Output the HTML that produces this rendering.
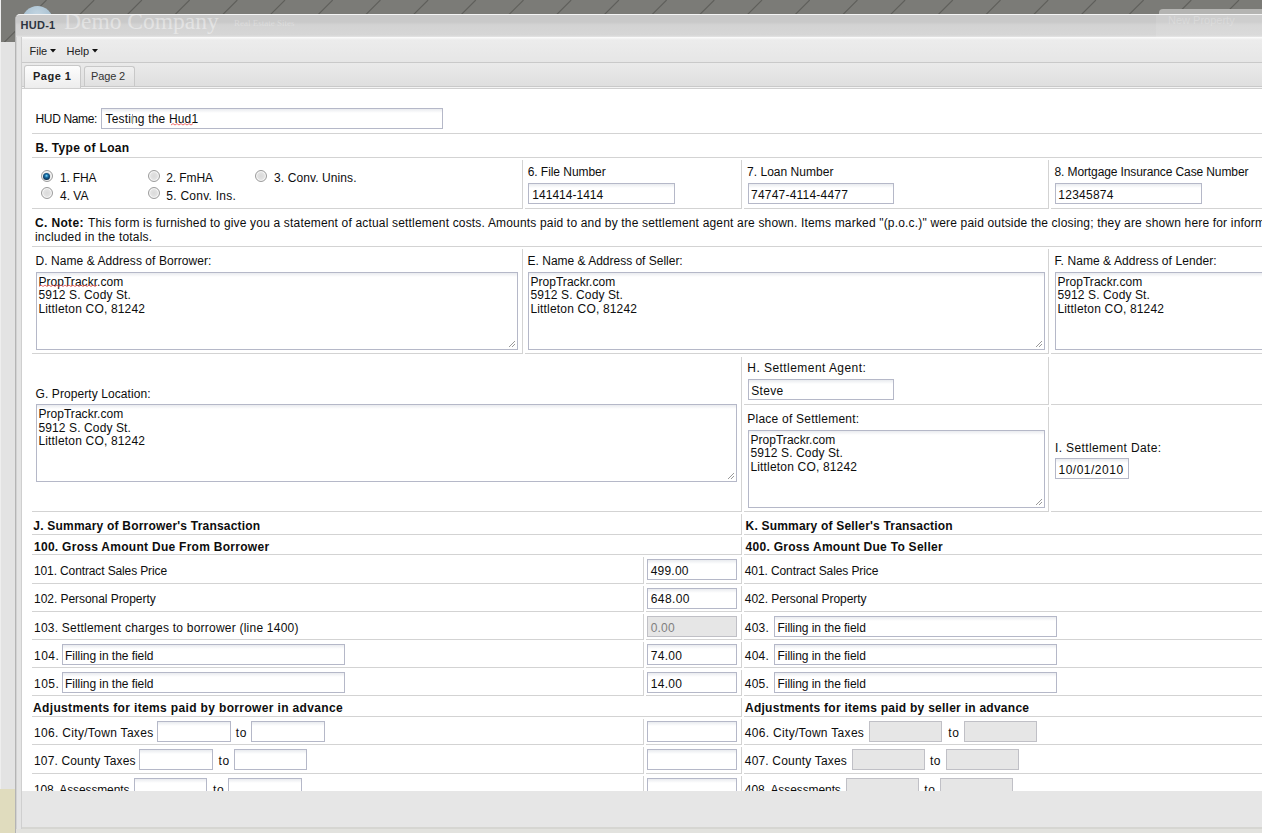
<!DOCTYPE html><html><head><meta charset="utf-8"><style>
html,body{margin:0;padding:0;width:1262px;height:833px;overflow:hidden;background:#e3e3e3}
.t{position:absolute;white-space:nowrap;font-family:"Liberation Sans",sans-serif;font-size:12px;line-height:14px;color:#0d0d0d}
.b{position:absolute}
</style></head><body>
<div class="b" style="left:0px;top:0px;width:1262px;height:42px;background:#7b7b77"></div>
<svg class="b" style="left:0;top:0" width="1262" height="42"><g stroke="#5f5f5b" stroke-width="1.1"><line x1="-1.2" y1="0" x2="-46.2" y2="45" /><line x1="46.5" y1="0" x2="1.5" y2="45" /><line x1="94.2" y1="0" x2="49.2" y2="45" /><line x1="141.9" y1="0" x2="96.9" y2="45" /><line x1="189.6" y1="0" x2="144.6" y2="45" /><line x1="237.3" y1="0" x2="192.3" y2="45" /><line x1="285.0" y1="0" x2="240.0" y2="45" /><line x1="332.7" y1="0" x2="287.7" y2="45" /><line x1="380.4" y1="0" x2="335.4" y2="45" /><line x1="428.1" y1="0" x2="383.1" y2="45" /><line x1="475.8" y1="0" x2="430.8" y2="45" /><line x1="523.5" y1="0" x2="478.5" y2="45" /><line x1="571.2" y1="0" x2="526.2" y2="45" /><line x1="618.9" y1="0" x2="573.9" y2="45" /><line x1="666.6" y1="0" x2="621.6" y2="45" /><line x1="714.3" y1="0" x2="669.3" y2="45" /><line x1="762.0" y1="0" x2="717.0" y2="45" /><line x1="809.7" y1="0" x2="764.7" y2="45" /><line x1="857.4" y1="0" x2="812.4" y2="45" /><line x1="905.1" y1="0" x2="860.1" y2="45" /><line x1="952.8" y1="0" x2="907.8" y2="45" /><line x1="1000.5" y1="0" x2="955.5" y2="45" /><line x1="1048.2" y1="0" x2="1003.2" y2="45" /><line x1="1095.9" y1="0" x2="1050.9" y2="45" /><line x1="1143.6" y1="0" x2="1098.6" y2="45" /><line x1="1191.3" y1="0" x2="1146.3" y2="45" /><line x1="1239.0" y1="0" x2="1194.0" y2="45" /><line x1="1286.7" y1="0" x2="1241.7" y2="45" /><line x1="1334.4" y1="0" x2="1289.4" y2="45" /></g></svg>
<div class="b" style="left:0px;top:0px;width:1px;height:834px;background:#eeeeee"></div>
<div class="b" style="left:22px;top:6px;width:31px;height:31px;border-radius:50%;background:radial-gradient(circle at 50% 30%,#c4d6e2,#93b0c4)"></div>
<div class="b" style="left:1159px;top:9px;width:120px;height:30px;border-radius:4px;background:#b4b4b2"></div>
<div class="b" style="left:0px;top:789px;width:15px;height:44px;background:#e0dcbe"></div>
<div class="b" style="left:15px;top:14px;width:1300px;height:830px;border-radius:5px 0 0 0;background:#e4e4e4;border-left:1px solid #b4b4b4;border-top:1px solid #f4f4f4;box-sizing:border-box"></div>
<div class="b" style="left:16px;top:37px;width:1px;height:796px;background:#d2d2d2"></div>
<div class="b" style="left:16px;top:15px;width:1246px;height:22px;background:linear-gradient(#c9c9c9 0,#c9c9c9 7px,#d3d3d3 10px,#d6d6d6 20px,#e4e4e4 22px);border-radius:4px 0 0 0"></div>
<div class="t" style="left:20.5px;top:19.0px;font-weight:bold;font-size:11px;line-height:13px;color:#2d3440;letter-spacing:0.275px;">HUD-1</div>
<div class="t" style="left:64px;top:8px;font-family:'Liberation Serif',serif;font-size:23.5px;line-height:26px;color:rgba(255,255,255,0.42)">Demo Company</div>
<div class="t" style="left:234px;top:17px;font-family:'Liberation Serif',serif;font-size:9px;line-height:12px;color:rgba(255,255,255,0.28)">Real Estate Sites</div>
<div class="b" style="left:1156px;top:15px;width:110px;height:22px;background:rgba(255,255,255,0.10)"></div>
<div class="t" style="left:1168px;top:14px;font-size:11px;line-height:12px;color:rgba(255,255,255,0.22)">New Property</div>
<div class="b" style="left:21px;top:37px;width:1241px;height:796px;background:#fff;border-left:1px solid #cfcfcf;box-sizing:border-box"></div>
<div class="b" style="left:22px;top:37px;width:1240px;height:26px;background:linear-gradient(#f6f6f6 0,#ececec 2px,#e6e6e6 100%);border-top:1px solid #fafafa;border-bottom:1px solid #c9c9c9;box-sizing:border-box"></div>
<div class="t" style="left:29.5px;top:44.5px;font-size:11px;line-height:13px;color:#222;">File</div>
<svg class="b" style="left:50px;top:49px" width="6" height="4"><path d="M0 0H6L3 3.5Z" fill="#111"/></svg>
<div class="t" style="left:66.5px;top:44.5px;font-size:11px;line-height:13px;color:#222;">Help</div>
<svg class="b" style="left:92px;top:49px" width="6" height="4"><path d="M0 0H6L3 3.5Z" fill="#111"/></svg>
<div class="b" style="left:22px;top:63px;width:1240px;height:26px;background:linear-gradient(#eaeaea,#dedede);border-bottom:1px solid #cacaca;box-sizing:border-box"></div>
<div class="b" style="left:22px;top:86px;width:1240px;height:1px;background:#c9c9c9"></div>
<div class="b" style="left:22px;top:87px;width:1240px;height:1px;background:#f4f4f4"></div>
<div class="b" style="left:22px;top:88px;width:1240px;height:1px;background:#cfcfcf"></div>
<div class="b" style="left:24px;top:65px;width:57px;height:23px;box-sizing:border-box;border:1px solid #c8c8c8;border-bottom:none;border-radius:3px 3px 0 0;background:linear-gradient(#fdfdfd,#ededed)"></div>
<div class="t" style="left:33.0px;top:70.0px;font-weight:bold;font-size:11px;line-height:13px;color:#222;letter-spacing:0.5px;">Page 1</div>
<div class="b" style="left:84px;top:66px;width:51px;height:20px;box-sizing:border-box;border:1px solid #c8c8c8;border-bottom:none;border-radius:3px 3px 0 0;background:linear-gradient(#f0f0f0,#e0e0e0)"></div>
<div class="t" style="left:91.0px;top:70.0px;font-size:11px;line-height:13px;color:#333;letter-spacing:-0.14px;">Page 2</div>
<div class="t" style="left:35.5px;top:112.0px;letter-spacing:-0.35px;">HUD Name:</div>
<div class="b" style="left:101px;top:108px;width:342px;height:21px;border:1px solid #b5b8c8;box-sizing:border-box;background:linear-gradient(#e9ebef,#fff 4px)"></div>
<div class="t" style="left:105.5px;top:112.0px;color:#0d0d0d;letter-spacing:0.167px;">Testing the Hud1</div>
<div class="b" style="left:32px;top:133px;width:1230px;height:1px;background:#d3d3d3"></div>
<div class="t" style="left:35.5px;top:140.5px;font-weight:bold;letter-spacing:0.321px;">B. Type of Loan</div>
<div class="b" style="left:32px;top:157px;width:1230px;height:1px;background:#d3d3d3"></div>
<div class="b" style="left:40.8px;top:170px;width:12px;height:12px;border-radius:50%;box-sizing:border-box;border:1px solid #9c9c9c;background:radial-gradient(circle at 50% 50%,#dadada 0,#e2e2e2 48%,#f6f6f6 62%,#cfcfcf 100%)"></div>
<div class="b" style="left:43.3px;top:172.5px;width:7px;height:7px;border-radius:50%;background:radial-gradient(circle at 50% 40%,#7fe0ff 0,#1a6ea6 30%,#0a2a48 75%)"></div>
<div class="t" style="left:60.0px;top:171.2px;letter-spacing:-0.16px;">1. FHA</div>
<div class="b" style="left:148px;top:170px;width:12px;height:12px;border-radius:50%;box-sizing:border-box;border:1px solid #9c9c9c;background:radial-gradient(circle at 50% 50%,#dadada 0,#e2e2e2 48%,#f6f6f6 62%,#cfcfcf 100%)"></div>
<div class="t" style="left:166.3px;top:171.2px;letter-spacing:-0.117px;">2. FmHA</div>
<div class="b" style="left:255px;top:170px;width:12px;height:12px;border-radius:50%;box-sizing:border-box;border:1px solid #9c9c9c;background:radial-gradient(circle at 50% 50%,#dadada 0,#e2e2e2 48%,#f6f6f6 62%,#cfcfcf 100%)"></div>
<div class="t" style="left:274.0px;top:171.2px;letter-spacing:0.1px;">3. Conv. Unins.</div>
<div class="b" style="left:40.8px;top:187.4px;width:12px;height:12px;border-radius:50%;box-sizing:border-box;border:1px solid #9c9c9c;background:radial-gradient(circle at 50% 50%,#dadada 0,#e2e2e2 48%,#f6f6f6 62%,#cfcfcf 100%)"></div>
<div class="t" style="left:60.0px;top:188.8px;letter-spacing:0.0px;">4. VA</div>
<div class="b" style="left:148px;top:187.4px;width:12px;height:12px;border-radius:50%;box-sizing:border-box;border:1px solid #9c9c9c;background:radial-gradient(circle at 50% 50%,#dadada 0,#e2e2e2 48%,#f6f6f6 62%,#cfcfcf 100%)"></div>
<div class="t" style="left:166.3px;top:188.8px;letter-spacing:0.25px;">5. Conv. Ins.</div>
<div class="b" style="left:32px;top:208px;width:491px;height:1px;background:#d3d3d3"></div>
<div class="b" style="left:522px;top:160px;width:1px;height:49px;background:#d3d3d3"></div>
<div class="t" style="left:527.7px;top:165.2px;letter-spacing:-0.054px;">6. File Number</div>
<div class="b" style="left:528px;top:183px;width:147px;height:21px;border:1px solid #b5b8c8;box-sizing:border-box;background:linear-gradient(#e9ebef,#fff 4px)"></div>
<div class="t" style="left:532.3px;top:187.5px;color:#0d0d0d;letter-spacing:0.02px;">141414-1414</div>
<div class="b" style="left:525px;top:208px;width:217px;height:1px;background:#d3d3d3"></div>
<div class="b" style="left:741px;top:160px;width:1px;height:49px;background:#d3d3d3"></div>
<div class="t" style="left:747.0px;top:165.2px;letter-spacing:0.031px;">7. Loan Number</div>
<div class="b" style="left:748px;top:183px;width:146px;height:21px;border:1px solid #b5b8c8;box-sizing:border-box;background:linear-gradient(#e9ebef,#fff 4px)"></div>
<div class="t" style="left:751.0px;top:187.5px;color:#0d0d0d;letter-spacing:0.214px;">74747-4114-4477</div>
<div class="b" style="left:744px;top:208px;width:305px;height:1px;background:#d3d3d3"></div>
<div class="b" style="left:1048px;top:160px;width:1px;height:49px;background:#d3d3d3"></div>
<div class="t" style="left:1054.5px;top:165.2px;letter-spacing:-0.109px;">8. Mortgage Insurance Case Number</div>
<div class="b" style="left:1055px;top:183px;width:147px;height:21px;border:1px solid #b5b8c8;box-sizing:border-box;background:linear-gradient(#e9ebef,#fff 4px)"></div>
<div class="t" style="left:1058.3px;top:187.5px;color:#0d0d0d;letter-spacing:0.243px;">12345874</div>
<div class="b" style="left:1051px;top:208px;width:212px;height:1px;background:#d3d3d3"></div>
<div class="t" style="left:35.0px;top:215.8px;font-weight:bold;letter-spacing:0.357px;">C. Note:</div>
<div class="t" style="left:88.0px;top:215.8px;letter-spacing:0.174px;">This form is furnished to give you a statement of actual settlement costs. Amounts paid to and by the settlement agent are shown. Items marked "(p.o.c.)" were paid outside the closing; they are shown here for informational purposes and are not</div>
<div class="t" style="left:35.0px;top:230.0px;letter-spacing:0.2px;">included in the totals.</div>
<div class="b" style="left:32px;top:246px;width:1230px;height:1px;background:#d3d3d3"></div>
<div class="t" style="left:35.6px;top:253.8px;letter-spacing:0.059px;">D. Name &amp; Address of Borrower:</div>
<div class="b" style="left:36px;top:272px;width:482px;height:78px;border:1px solid #b5b8c8;box-sizing:border-box;background:linear-gradient(#e9ebef,#fff 4px)"></div>
<div class="t" style="left:38.4px;top:274.7px;letter-spacing:0.046px;">PropTrackr.com</div>
<div class="t" style="left:38.4px;top:288.3px;letter-spacing:0.12px;">5912 S. Cody St.</div>
<div class="t" style="left:38.4px;top:301.9px;letter-spacing:0.178px;">Littleton CO, 81242</div>
<svg class="b" style="left:508px;top:340px" width="8" height="8"><path d="M1 7 L7 1 M4 7 L7 4" stroke="#9a9a9a" stroke-width="1"/></svg>
<div class="b" style="left:32px;top:353px;width:491px;height:1px;background:#d3d3d3"></div>
<div class="b" style="left:522px;top:249px;width:1px;height:105px;background:#d3d3d3"></div>
<div class="t" style="left:527.6px;top:253.8px;letter-spacing:-0.011px;">E. Name &amp; Address of Seller:</div>
<div class="b" style="left:528px;top:272px;width:517px;height:78px;border:1px solid #b5b8c8;box-sizing:border-box;background:linear-gradient(#e9ebef,#fff 4px)"></div>
<div class="t" style="left:530.4px;top:274.7px;letter-spacing:0.046px;">PropTrackr.com</div>
<div class="t" style="left:530.4px;top:288.3px;letter-spacing:0.12px;">5912 S. Cody St.</div>
<div class="t" style="left:530.4px;top:301.9px;letter-spacing:0.178px;">Littleton CO, 81242</div>
<svg class="b" style="left:1035px;top:340px" width="8" height="8"><path d="M1 7 L7 1 M4 7 L7 4" stroke="#9a9a9a" stroke-width="1"/></svg>
<div class="b" style="left:525px;top:353px;width:524px;height:1px;background:#d3d3d3"></div>
<div class="b" style="left:1048px;top:249px;width:1px;height:105px;background:#d3d3d3"></div>
<div class="t" style="left:1054.5px;top:253.8px;letter-spacing:0.074px;">F. Name &amp; Address of Lender:</div>
<div class="b" style="left:1055px;top:272px;width:246px;height:78px;border:1px solid #b5b8c8;box-sizing:border-box;background:linear-gradient(#e9ebef,#fff 4px)"></div>
<div class="t" style="left:1057.4px;top:274.7px;letter-spacing:0.046px;">PropTrackr.com</div>
<div class="t" style="left:1057.4px;top:288.3px;letter-spacing:0.12px;">5912 S. Cody St.</div>
<div class="t" style="left:1057.4px;top:301.9px;letter-spacing:0.178px;">Littleton CO, 81242</div>
<div class="b" style="left:1051px;top:353px;width:212px;height:1px;background:#d3d3d3"></div>
<div class="t" style="left:35.6px;top:386.8px;letter-spacing:0.08px;">G. Property Location:</div>
<div class="b" style="left:36px;top:404px;width:701px;height:78px;border:1px solid #b5b8c8;box-sizing:border-box;background:linear-gradient(#e9ebef,#fff 4px)"></div>
<div class="t" style="left:38.4px;top:407.0px;letter-spacing:0.046px;">PropTrackr.com</div>
<div class="t" style="left:38.4px;top:420.6px;letter-spacing:0.12px;">5912 S. Cody St.</div>
<div class="t" style="left:38.4px;top:434.2px;letter-spacing:0.178px;">Littleton CO, 81242</div>
<svg class="b" style="left:727px;top:472px" width="8" height="8"><path d="M1 7 L7 1 M4 7 L7 4" stroke="#9a9a9a" stroke-width="1"/></svg>
<div class="b" style="left:32px;top:511px;width:710px;height:1px;background:#d3d3d3"></div>
<div class="b" style="left:741px;top:357px;width:1px;height:155px;background:#d3d3d3"></div>
<div class="t" style="left:747.3px;top:361.2px;letter-spacing:0.447px;">H. Settlement Agent:</div>
<div class="b" style="left:748px;top:379px;width:146px;height:21px;border:1px solid #b5b8c8;box-sizing:border-box;background:linear-gradient(#e9ebef,#fff 4px)"></div>
<div class="t" style="left:751.3px;top:383.5px;color:#0d0d0d;letter-spacing:0.275px;">Steve</div>
<div class="b" style="left:744px;top:404px;width:305px;height:1px;background:#d3d3d3"></div>
<div class="b" style="left:1048px;top:357px;width:1px;height:48px;background:#d3d3d3"></div>
<div class="b" style="left:1051px;top:404px;width:212px;height:1px;background:#d3d3d3"></div>
<div class="t" style="left:747.3px;top:412.0px;letter-spacing:0.232px;">Place of Settlement:</div>
<div class="b" style="left:748px;top:430px;width:297px;height:78px;border:1px solid #b5b8c8;box-sizing:border-box;background:linear-gradient(#e9ebef,#fff 4px)"></div>
<div class="t" style="left:750.4px;top:432.7px;letter-spacing:0.046px;">PropTrackr.com</div>
<div class="t" style="left:750.4px;top:446.3px;letter-spacing:0.12px;">5912 S. Cody St.</div>
<div class="t" style="left:750.4px;top:459.9px;letter-spacing:0.178px;">Littleton CO, 81242</div>
<svg class="b" style="left:1035px;top:498px" width="8" height="8"><path d="M1 7 L7 1 M4 7 L7 4" stroke="#9a9a9a" stroke-width="1"/></svg>
<div class="b" style="left:744px;top:511px;width:305px;height:1px;background:#d3d3d3"></div>
<div class="b" style="left:1048px;top:407px;width:1px;height:105px;background:#d3d3d3"></div>
<div class="t" style="left:1055.0px;top:440.5px;letter-spacing:0.372px;">I. Settlement Date:</div>
<div class="b" style="left:1055px;top:458px;width:74px;height:21px;border:1px solid #b5b8c8;box-sizing:border-box;background:linear-gradient(#e9ebef,#fff 4px)"></div>
<div class="t" style="left:1058.5px;top:462.5px;color:#0d0d0d;letter-spacing:0.5px;">10/01/2010</div>
<div class="b" style="left:1051px;top:511px;width:212px;height:1px;background:#d3d3d3"></div>
<div class="t" style="left:33.3px;top:519.0px;font-weight:bold;letter-spacing:0.209px;">J. Summary of Borrower's Transaction</div>
<div class="b" style="left:32px;top:534px;width:710px;height:1px;background:#d3d3d3"></div>
<div class="b" style="left:741px;top:514px;width:1px;height:21px;background:#d3d3d3"></div>
<div class="t" style="left:745.6px;top:519.0px;font-weight:bold;letter-spacing:0.185px;">K. Summary of Seller's Transaction</div>
<div class="b" style="left:744px;top:534px;width:519px;height:1px;background:#d3d3d3"></div>
<div class="t" style="left:34.0px;top:540.0px;font-weight:bold;letter-spacing:0.279px;">100. Gross Amount Due From Borrower</div>
<div class="b" style="left:32px;top:554px;width:710px;height:1px;background:#d3d3d3"></div>
<div class="b" style="left:741px;top:537px;width:1px;height:18px;background:#d3d3d3"></div>
<div class="t" style="left:745.6px;top:540.0px;font-weight:bold;letter-spacing:0.28px;">400. Gross Amount Due To Seller</div>
<div class="b" style="left:744px;top:554px;width:519px;height:1px;background:#d3d3d3"></div>
<div class="t" style="left:34.0px;top:564.3px;letter-spacing:-0.125px;">101. Contract Sales Price</div>
<div class="b" style="left:32px;top:583px;width:612px;height:1px;background:#d3d3d3"></div>
<div class="b" style="left:643px;top:557px;width:1px;height:27px;background:#d3d3d3"></div>
<div class="b" style="left:647px;top:559px;width:90px;height:21px;border:1px solid #b5b8c8;box-sizing:border-box;background:linear-gradient(#e9ebef,#fff 4px)"></div>
<div class="t" style="left:650.7px;top:564.3px;color:#0d0d0d;letter-spacing:0.22px;">499.00</div>
<div class="b" style="left:646px;top:583px;width:96px;height:1px;background:#d3d3d3"></div>
<div class="b" style="left:741px;top:557px;width:1px;height:27px;background:#d3d3d3"></div>
<div class="t" style="left:744.8px;top:564.3px;letter-spacing:-0.104px;">401. Contract Sales Price</div>
<div class="b" style="left:744px;top:583px;width:519px;height:1px;background:#d3d3d3"></div>
<div class="t" style="left:34.0px;top:592.2px;letter-spacing:-0.048px;">102. Personal Property</div>
<div class="b" style="left:32px;top:611px;width:612px;height:1px;background:#d3d3d3"></div>
<div class="b" style="left:643px;top:586px;width:1px;height:26px;background:#d3d3d3"></div>
<div class="b" style="left:647px;top:588px;width:90px;height:21px;border:1px solid #b5b8c8;box-sizing:border-box;background:linear-gradient(#e9ebef,#fff 4px)"></div>
<div class="t" style="left:650.7px;top:592.2px;color:#0d0d0d;letter-spacing:0.42px;">648.00</div>
<div class="b" style="left:646px;top:611px;width:96px;height:1px;background:#d3d3d3"></div>
<div class="b" style="left:741px;top:586px;width:1px;height:26px;background:#d3d3d3"></div>
<div class="t" style="left:744.8px;top:592.2px;letter-spacing:-0.048px;">402. Personal Property</div>
<div class="b" style="left:744px;top:611px;width:519px;height:1px;background:#d3d3d3"></div>
<div class="t" style="left:34.0px;top:620.5px;letter-spacing:0.224px;">103. Settlement charges to borrower (line 1400)</div>
<div class="b" style="left:32px;top:639px;width:612px;height:1px;background:#d3d3d3"></div>
<div class="b" style="left:643px;top:614px;width:1px;height:26px;background:#d3d3d3"></div>
<div class="b" style="left:647px;top:616px;width:90px;height:21px;border:1px solid #c0c0c6;box-sizing:border-box;background:#e6e6e6"></div>
<div class="t" style="left:650.7px;top:620.5px;color:#808080;letter-spacing:0.2px;">0.00</div>
<div class="b" style="left:646px;top:639px;width:96px;height:1px;background:#d3d3d3"></div>
<div class="b" style="left:741px;top:614px;width:1px;height:26px;background:#d3d3d3"></div>
<div class="t" style="left:744.8px;top:620.5px;letter-spacing:0.2px;">403.</div>
<div class="b" style="left:774px;top:616px;width:283px;height:21px;border:1px solid #b5b8c8;box-sizing:border-box;background:linear-gradient(#e9ebef,#fff 4px)"></div>
<div class="t" style="left:777.5px;top:620.5px;color:#0d0d0d;letter-spacing:-0.053px;">Filling in the field</div>
<div class="b" style="left:744px;top:639px;width:519px;height:1px;background:#d3d3d3"></div>
<div class="t" style="left:34.0px;top:648.8px;letter-spacing:0.5px;">104.</div>
<div class="b" style="left:62px;top:644px;width:283px;height:21px;border:1px solid #b5b8c8;box-sizing:border-box;background:linear-gradient(#e9ebef,#fff 4px)"></div>
<div class="t" style="left:65.1px;top:648.8px;color:#0d0d0d;letter-spacing:-0.053px;">Filling in the field</div>
<div class="b" style="left:32px;top:667px;width:612px;height:1px;background:#d3d3d3"></div>
<div class="b" style="left:643px;top:642px;width:1px;height:26px;background:#d3d3d3"></div>
<div class="b" style="left:647px;top:644px;width:90px;height:21px;border:1px solid #b5b8c8;box-sizing:border-box;background:linear-gradient(#e9ebef,#fff 4px)"></div>
<div class="t" style="left:650.7px;top:648.8px;color:#0d0d0d;letter-spacing:0.3px;">74.00</div>
<div class="b" style="left:646px;top:667px;width:96px;height:1px;background:#d3d3d3"></div>
<div class="b" style="left:741px;top:642px;width:1px;height:26px;background:#d3d3d3"></div>
<div class="t" style="left:744.8px;top:648.8px;letter-spacing:0.2px;">404.</div>
<div class="b" style="left:774px;top:644px;width:283px;height:21px;border:1px solid #b5b8c8;box-sizing:border-box;background:linear-gradient(#e9ebef,#fff 4px)"></div>
<div class="t" style="left:777.5px;top:648.8px;color:#0d0d0d;letter-spacing:-0.053px;">Filling in the field</div>
<div class="b" style="left:744px;top:667px;width:519px;height:1px;background:#d3d3d3"></div>
<div class="t" style="left:34.0px;top:677.0px;letter-spacing:0.5px;">105.</div>
<div class="b" style="left:62px;top:672px;width:283px;height:21px;border:1px solid #b5b8c8;box-sizing:border-box;background:linear-gradient(#e9ebef,#fff 4px)"></div>
<div class="t" style="left:65.1px;top:677.0px;color:#0d0d0d;letter-spacing:-0.053px;">Filling in the field</div>
<div class="b" style="left:32px;top:695px;width:612px;height:1px;background:#d3d3d3"></div>
<div class="b" style="left:643px;top:670px;width:1px;height:26px;background:#d3d3d3"></div>
<div class="b" style="left:647px;top:672px;width:90px;height:21px;border:1px solid #b5b8c8;box-sizing:border-box;background:linear-gradient(#e9ebef,#fff 4px)"></div>
<div class="t" style="left:650.7px;top:677.0px;color:#0d0d0d;letter-spacing:0.3px;">14.00</div>
<div class="b" style="left:646px;top:695px;width:96px;height:1px;background:#d3d3d3"></div>
<div class="b" style="left:741px;top:670px;width:1px;height:26px;background:#d3d3d3"></div>
<div class="t" style="left:744.8px;top:677.0px;letter-spacing:0.2px;">405.</div>
<div class="b" style="left:774px;top:672px;width:283px;height:21px;border:1px solid #b5b8c8;box-sizing:border-box;background:linear-gradient(#e9ebef,#fff 4px)"></div>
<div class="t" style="left:777.5px;top:677.0px;color:#0d0d0d;letter-spacing:-0.053px;">Filling in the field</div>
<div class="b" style="left:744px;top:695px;width:519px;height:1px;background:#d3d3d3"></div>
<div class="t" style="left:33.0px;top:701.2px;font-weight:bold;letter-spacing:0.354px;">Adjustments for items paid by borrower in advance</div>
<div class="b" style="left:32px;top:716px;width:710px;height:1px;background:#d3d3d3"></div>
<div class="b" style="left:741px;top:698px;width:1px;height:19px;background:#d3d3d3"></div>
<div class="t" style="left:745.0px;top:701.2px;font-weight:bold;letter-spacing:0.259px;">Adjustments for items paid by seller in advance</div>
<div class="b" style="left:744px;top:716px;width:519px;height:1px;background:#d3d3d3"></div>
<div class="t" style="left:34.0px;top:725.7px;letter-spacing:0.316px;">106. City/Town Taxes</div>
<div class="b" style="left:157px;top:721px;width:74px;height:21px;border:1px solid #b5b8c8;box-sizing:border-box;background:linear-gradient(#e9ebef,#fff 4px)"></div>
<div class="t" style="left:235.8px;top:725.7px;letter-spacing:0.6px;">to</div>
<div class="b" style="left:251px;top:721px;width:74px;height:21px;border:1px solid #b5b8c8;box-sizing:border-box;background:linear-gradient(#e9ebef,#fff 4px)"></div>
<div class="b" style="left:32px;top:744px;width:612px;height:1px;background:#d3d3d3"></div>
<div class="b" style="left:643px;top:719px;width:1px;height:26px;background:#d3d3d3"></div>
<div class="b" style="left:647px;top:721px;width:90px;height:21px;border:1px solid #b5b8c8;box-sizing:border-box;background:linear-gradient(#e9ebef,#fff 4px)"></div>
<div class="b" style="left:646px;top:744px;width:96px;height:1px;background:#d3d3d3"></div>
<div class="b" style="left:741px;top:719px;width:1px;height:26px;background:#d3d3d3"></div>
<div class="t" style="left:744.8px;top:725.7px;letter-spacing:0.311px;">406. City/Town Taxes</div>
<div class="b" style="left:869px;top:721px;width:73px;height:21px;border:1px solid #c0c0c6;box-sizing:border-box;background:#e6e6e6"></div>
<div class="t" style="left:948.3px;top:725.7px;letter-spacing:0.6px;">to</div>
<div class="b" style="left:964px;top:721px;width:73px;height:21px;border:1px solid #c0c0c6;box-sizing:border-box;background:#e6e6e6"></div>
<div class="b" style="left:744px;top:744px;width:519px;height:1px;background:#d3d3d3"></div>
<div class="t" style="left:34.0px;top:753.7px;letter-spacing:0.15px;">107. County Taxes</div>
<div class="b" style="left:139px;top:749px;width:74px;height:21px;border:1px solid #b5b8c8;box-sizing:border-box;background:linear-gradient(#e9ebef,#fff 4px)"></div>
<div class="t" style="left:218.6px;top:753.7px;letter-spacing:0.6px;">to</div>
<div class="b" style="left:234px;top:749px;width:73px;height:21px;border:1px solid #b5b8c8;box-sizing:border-box;background:linear-gradient(#e9ebef,#fff 4px)"></div>
<div class="b" style="left:32px;top:773px;width:612px;height:1px;background:#d3d3d3"></div>
<div class="b" style="left:643px;top:747px;width:1px;height:27px;background:#d3d3d3"></div>
<div class="b" style="left:647px;top:749px;width:90px;height:21px;border:1px solid #b5b8c8;box-sizing:border-box;background:linear-gradient(#e9ebef,#fff 4px)"></div>
<div class="b" style="left:646px;top:773px;width:96px;height:1px;background:#d3d3d3"></div>
<div class="b" style="left:741px;top:747px;width:1px;height:27px;background:#d3d3d3"></div>
<div class="t" style="left:744.8px;top:753.7px;letter-spacing:0.175px;">407. County Taxes</div>
<div class="b" style="left:852px;top:749px;width:73px;height:21px;border:1px solid #c0c0c6;box-sizing:border-box;background:#e6e6e6"></div>
<div class="t" style="left:929.9px;top:753.7px;letter-spacing:0.6px;">to</div>
<div class="b" style="left:946px;top:749px;width:73px;height:21px;border:1px solid #c0c0c6;box-sizing:border-box;background:#e6e6e6"></div>
<div class="b" style="left:744px;top:773px;width:519px;height:1px;background:#d3d3d3"></div>
<div class="t" style="left:34.0px;top:782.7px;letter-spacing:-0.133px;">108. Assessments</div>
<div class="b" style="left:134px;top:778px;width:73px;height:21px;border:1px solid #b5b8c8;box-sizing:border-box;background:linear-gradient(#e9ebef,#fff 4px)"></div>
<div class="t" style="left:213.0px;top:782.7px;letter-spacing:0.6px;">to</div>
<div class="b" style="left:228px;top:778px;width:74px;height:21px;border:1px solid #b5b8c8;box-sizing:border-box;background:linear-gradient(#e9ebef,#fff 4px)"></div>
<div class="b" style="left:32px;top:802px;width:612px;height:1px;background:#d3d3d3"></div>
<div class="b" style="left:643px;top:776px;width:1px;height:27px;background:#d3d3d3"></div>
<div class="b" style="left:647px;top:778px;width:90px;height:21px;border:1px solid #b5b8c8;box-sizing:border-box;background:linear-gradient(#e9ebef,#fff 4px)"></div>
<div class="b" style="left:646px;top:802px;width:96px;height:1px;background:#d3d3d3"></div>
<div class="b" style="left:741px;top:776px;width:1px;height:27px;background:#d3d3d3"></div>
<div class="t" style="left:744.8px;top:782.7px;letter-spacing:-0.087px;">408. Assessments</div>
<div class="b" style="left:846px;top:778px;width:73px;height:21px;border:1px solid #c0c0c6;box-sizing:border-box;background:#e6e6e6"></div>
<div class="t" style="left:924.3px;top:782.7px;letter-spacing:0.6px;">to</div>
<div class="b" style="left:940px;top:778px;width:73px;height:21px;border:1px solid #c0c0c6;box-sizing:border-box;background:#e6e6e6"></div>
<div class="b" style="left:744px;top:802px;width:519px;height:1px;background:#d3d3d3"></div>
<svg class="b" style="left:0;top:0;overflow:visible" width="1" height="1"><path d="M39 286.5 l2 -1.4 l2 1.4 l2 -1.4 l2 1.4 l2 -1.4 l2 1.4 l2 -1.4 l2 1.4 l2 -1.4 l2 1.4 l2 -1.4 l2 1.4 l2 -1.4 l2 1.4 l2 -1.4 l2 1.4 l2 -1.4 l2 1.4 l2 -1.4 l2 1.4 l2 -1.4 l2 1.4 l2 -1.4 l2 1.4 l2 -1.4 l2 1.4 l2 -1.4 l2 1.4 l2 -1.4" fill="none" stroke="#e84a4a" stroke-width="0.8"/></svg>
<svg class="b" style="left:0;top:0;overflow:visible" width="1" height="1"><path d="M171 125 l2 -1.4 l2 1.4 l2 -1.4 l2 1.4 l2 -1.4 l2 1.4 l2 -1.4 l2 1.4 l2 -1.4 l2 1.4 l2 -1.4" fill="none" stroke="#e84a4a" stroke-width="0.8"/></svg>
<div class="b" style="left:132px;top:114px;width:1px;height:10px;background:#9a9ab0"></div>
<div class="b" style="left:22px;top:791px;width:1240px;height:37px;background:#e6e6e6"></div>
<div class="b" style="left:22px;top:827px;width:1240px;height:3px;background:#d6d6d2"></div>
<div class="b" style="left:16px;top:829px;width:1246px;height:4px;background:#e2e2de"></div>
</body></html>
